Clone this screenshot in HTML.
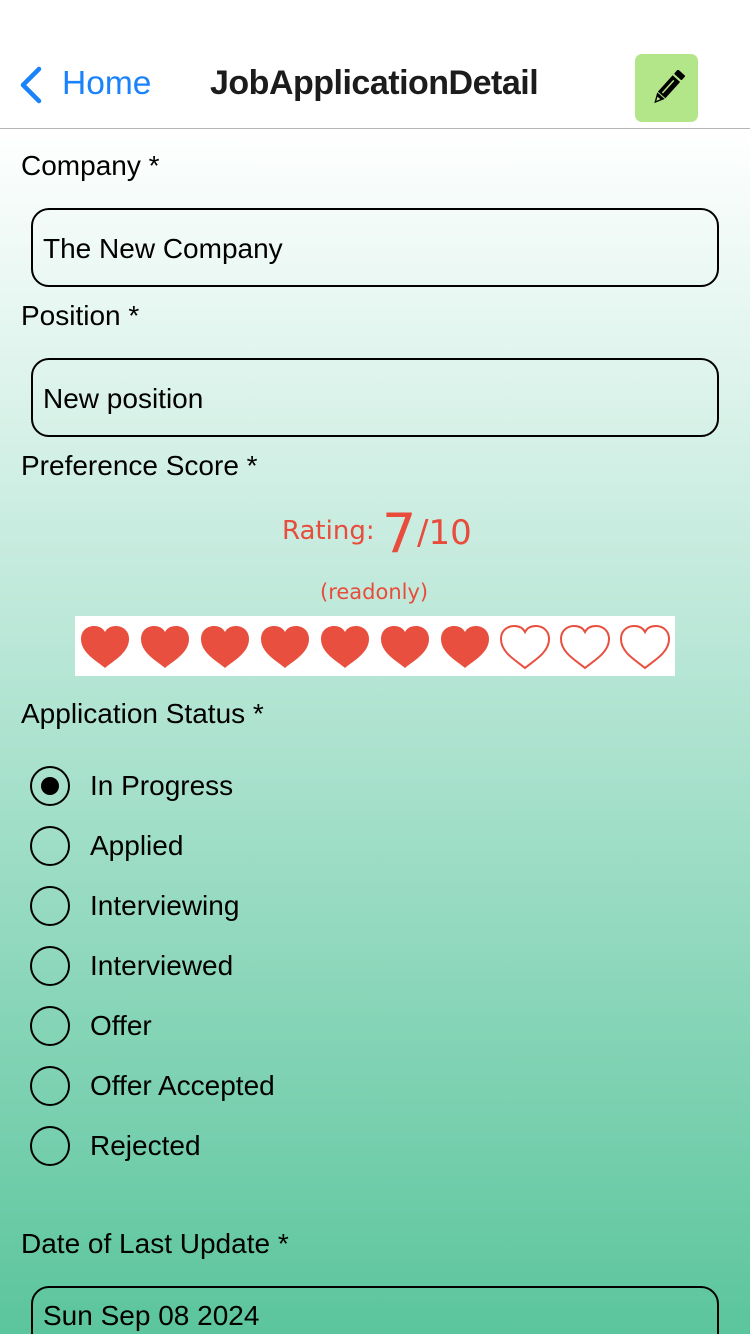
<!DOCTYPE html>
<html style="overflow:hidden;width:750px;height:1334px"><head><meta charset="utf-8"><style>
*{margin:0;padding:0;box-sizing:border-box}
body{width:750px;height:1334px;overflow:hidden;font-family:"Liberation Sans",sans-serif;background:#fff;position:relative}
.bg{position:absolute;left:0;top:129px;width:750px;height:1205px;background:linear-gradient(#ffffff 0%,#b1e4d2 48%,#5bc59d 100%)}
.t{position:absolute;font-size:28px;color:#000;white-space:nowrap;line-height:1}
.box{position:absolute;left:31px;width:688px;height:79px;border:2px solid #000;border-radius:18px}
.r{position:absolute;left:30px;width:40px;height:40px;border:2px solid #000;border-radius:50%}
.r.on::after{content:"";position:absolute;left:9px;top:9px;width:18px;height:18px;border-radius:50%;background:#000}
</style></head><body>
<div class="bg"></div>
<div style="position:absolute;left:0;top:128px;width:750px;height:1px;background:#b5b5b5"></div>
<svg style="position:absolute;left:18px;top:66px" width="26" height="38" viewBox="0 0 26 38"><path d="M21 3 L5 19 L21 35" fill="none" stroke="#1a82fb" stroke-width="4.5" stroke-linecap="round" stroke-linejoin="round"/></svg>
<div class="t" style="left:62px;top:67px;font-size:33.5px;color:#1a82fb">Home</div>
<div class="t" style="left:210px;top:66px;font-size:34px;color:#1c1c1c;font-weight:bold;letter-spacing:-0.5px">JobApplicationDetail</div>
<div style="position:absolute;left:635px;top:54px;width:63px;height:68px;background:#b3e689;border-radius:7px"></div>
<svg style="position:absolute;left:647px;top:70px" width="40" height="38" viewBox="0 0 40 38"><g transform="rotate(42 20 19)"><rect x="15" y="-3" width="10" height="6" rx="1" fill="#000"/><rect x="15" y="5" width="10" height="22" fill="#000"/><rect x="18.5" y="8" width="1.5" height="17" fill="#b3e689"/><path d="M15 28 L25 28 L20 38 Z" fill="#000"/><path d="M18 31 L22 31 L20 35Z" fill="#b3e689"/></g></svg>

<div class="t" style="left:21px;top:152px">Company *</div>
<div class="box" style="top:208px"></div>
<div class="t" style="left:43px;top:235px">The New Company</div>
<div class="t" style="left:21px;top:302px">Position *</div>
<div class="box" style="top:358px"></div>
<div class="t" style="left:43px;top:385px">New position</div>
<div class="t" style="left:21px;top:452px">Preference Score *</div>

<div class="t" style="left:282px;top:518px;color:#e74c3c;font-family:'DejaVu Sans',sans-serif;font-size:26px">Rating:</div>
<div class="t" style="left:382px;top:507px;color:#e74c3c;font-family:'DejaVu Sans',sans-serif;font-size:54px">7</div>
<div class="t" style="left:417px;top:516px;color:#e74c3c;font-family:'DejaVu Sans',sans-serif;font-size:34px">/10</div>
<div class="t" style="left:320px;top:582px;color:#e74c3c;font-family:'DejaVu Sans',sans-serif;font-size:21px">(readonly)</div>
<div style="position:absolute;left:75px;top:616px;width:600px;height:60px;background:#fff"></div>
<svg style="position:absolute;left:75px;top:616px" width="600" height="60" viewBox="0 0 600 60">
<defs><path id="h" d="M25 52 C17 45 1 37 1 23 C1 14 8 10 14 10 C19 10 23 12 25 16 C27 12 31 10 36 10 C42 10 49 14 49 23 C49 37 33 45 25 52 Z"/></defs>
<g fill="#e84f3f"><use href="#h" x="5"/><use href="#h" x="65"/><use href="#h" x="125"/><use href="#h" x="185"/><use href="#h" x="245"/><use href="#h" x="305"/><use href="#h" x="365"/></g>
<g fill="none" stroke="#e84f3f" stroke-width="2"><use href="#h" x="425"/><use href="#h" x="485"/><use href="#h" x="545"/></g>
</svg>

<div class="t" style="left:21px;top:700px">Application Status *</div>
<div class="r on" style="top:766px"></div><div class="t" style="left:90px;top:772px">In Progress</div>
<div class="r" style="top:826px"></div><div class="t" style="left:90px;top:832px">Applied</div>
<div class="r" style="top:886px"></div><div class="t" style="left:90px;top:892px">Interviewing</div>
<div class="r" style="top:946px"></div><div class="t" style="left:90px;top:952px">Interviewed</div>
<div class="r" style="top:1006px"></div><div class="t" style="left:90px;top:1012px">Offer</div>
<div class="r" style="top:1066px"></div><div class="t" style="left:90px;top:1072px">Offer Accepted</div>
<div class="r" style="top:1126px"></div><div class="t" style="left:90px;top:1132px">Rejected</div>

<div class="t" style="left:21px;top:1230px">Date of Last Update *</div>
<div class="box" style="top:1286px;height:90px"></div>
<div class="t" style="left:43px;top:1302px">Sun Sep 08 2024</div>
</body></html>
